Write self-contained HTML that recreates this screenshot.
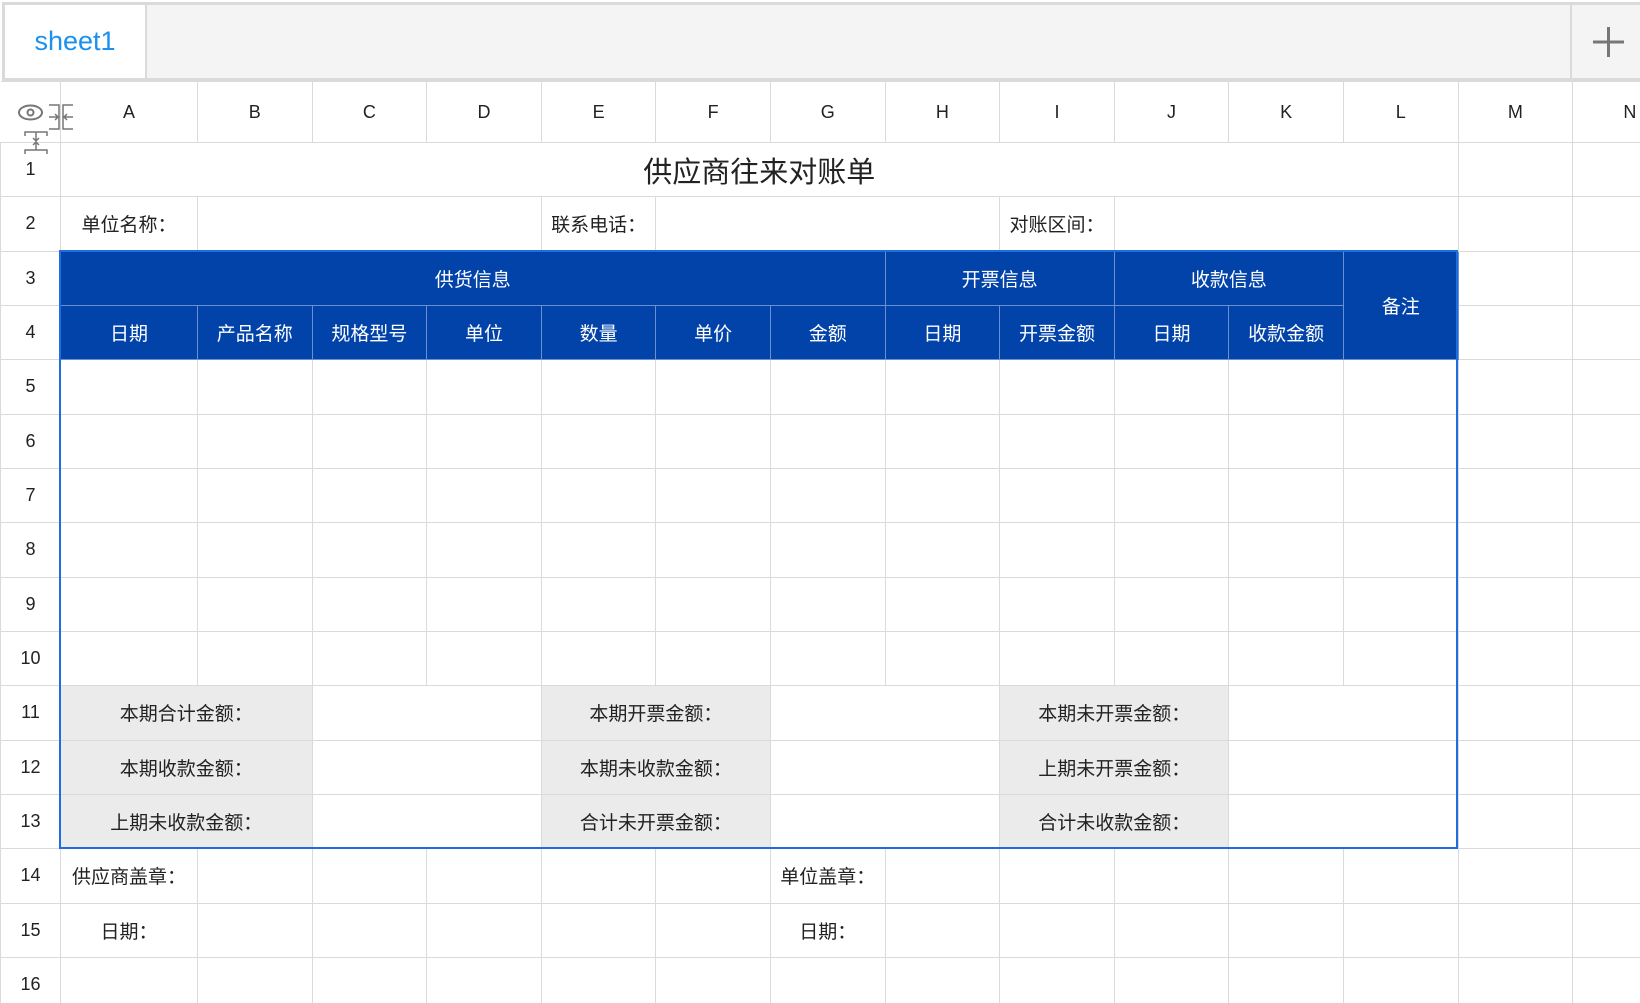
<!DOCTYPE html>
<html><head><meta charset="utf-8"><style>
*{margin:0;padding:0;box-sizing:border-box}
body{width:1640px;height:1003px;overflow:hidden;background:#fff;font-family:"Liberation Sans","Noto Sans CJK SC",sans-serif;position:relative;color:#222}
#tabbar{position:absolute;left:2px;top:2px;width:1640px;height:79px;background:#f4f4f4;border:3px solid #dadada;border-right:none}
#tab{position:absolute;left:0;top:0;width:142px;height:73px;background:#fff;border-right:2px solid #dadada;color:#1a90f0;font-size:27px;text-align:center;line-height:73px}
#plus{position:absolute;left:1565px;top:0;width:80px;height:73px;border-left:2px solid #dadada}
#grid{position:absolute;left:0;top:81px;overflow:hidden;width:1640px;height:922px}
table{border-collapse:collapse;table-layout:fixed;width:1687px}
td{border:1.5px solid #dadada;text-align:center;vertical-align:middle;font-size:19px;overflow:hidden;white-space:nowrap;padding:0}
tr{height:54.33px}
tr.h{height:61px}
tr.h td{font-size:18px}
td.rh{font-size:18px;color:#222}
td.b{background:#0243aa;color:#fff;border-color:#6b8fd0}
td.g{background:#ebebeb}
td.t{font-size:29px}
#blue{position:absolute;left:59px;top:250px;width:1399px;height:599px;border:2px solid #1f6ee0;pointer-events:none}
#icons{position:absolute;left:0;top:95px}
</style></head><body>
<div id="tabbar"><div id="tab">sheet1</div><div id="plus"><svg width="80" height="73"><path d="M21 37H52M36.5 22V52" stroke="#777" stroke-width="3"/></svg></div></div>
<div id="grid">
<table>
<colgroup><col style="width:60px"><col style="width:137px"><col span="13" style="width:114.6px"></colgroup>
<tr class="h"><td style="border-left:none"></td><td>A</td><td>B</td><td>C</td><td>D</td><td>E</td><td>F</td><td>G</td><td>H</td><td>I</td><td>J</td><td>K</td><td>L</td><td>M</td><td>N</td></tr>
<tr><td class="rh">1</td><td colspan="12" class="t">供应商往来对账单</td><td></td><td></td></tr>
<tr><td class="rh">2</td><td>单位名称：</td><td colspan="3"></td><td>联系电话：</td><td colspan="3"></td><td>对账区间：</td><td colspan="3"></td><td></td><td></td></tr>
<tr><td class="rh">3</td><td colspan="7" class="b">供货信息</td><td colspan="2" class="b">开票信息</td><td colspan="2" class="b">收款信息</td><td rowspan="2" class="b">备注</td><td></td><td></td></tr>
<tr><td class="rh">4</td><td class="b">日期</td><td class="b">产品名称</td><td class="b">规格型号</td><td class="b">单位</td><td class="b">数量</td><td class="b">单价</td><td class="b">金额</td><td class="b">日期</td><td class="b">开票金额</td><td class="b">日期</td><td class="b">收款金额</td><td></td><td></td></tr>
<tr><td class="rh">5</td><td></td><td></td><td></td><td></td><td></td><td></td><td></td><td></td><td></td><td></td><td></td><td></td><td></td><td></td></tr>
<tr><td class="rh">6</td><td></td><td></td><td></td><td></td><td></td><td></td><td></td><td></td><td></td><td></td><td></td><td></td><td></td><td></td></tr>
<tr><td class="rh">7</td><td></td><td></td><td></td><td></td><td></td><td></td><td></td><td></td><td></td><td></td><td></td><td></td><td></td><td></td></tr>
<tr><td class="rh">8</td><td></td><td></td><td></td><td></td><td></td><td></td><td></td><td></td><td></td><td></td><td></td><td></td><td></td><td></td></tr>
<tr><td class="rh">9</td><td></td><td></td><td></td><td></td><td></td><td></td><td></td><td></td><td></td><td></td><td></td><td></td><td></td><td></td></tr>
<tr><td class="rh">10</td><td></td><td></td><td></td><td></td><td></td><td></td><td></td><td></td><td></td><td></td><td></td><td></td><td></td><td></td></tr>
<tr><td class="rh">11</td><td colspan="2" class="g">本期合计金额：</td><td colspan="2"></td><td colspan="2" class="g">本期开票金额：</td><td colspan="2"></td><td colspan="2" class="g">本期未开票金额：</td><td colspan="2"></td><td></td><td></td></tr>
<tr><td class="rh">12</td><td colspan="2" class="g">本期收款金额：</td><td colspan="2"></td><td colspan="2" class="g">本期未收款金额：</td><td colspan="2"></td><td colspan="2" class="g">上期未开票金额：</td><td colspan="2"></td><td></td><td></td></tr>
<tr><td class="rh">13</td><td colspan="2" class="g">上期未收款金额：</td><td colspan="2"></td><td colspan="2" class="g">合计未开票金额：</td><td colspan="2"></td><td colspan="2" class="g">合计未收款金额：</td><td colspan="2"></td><td></td><td></td></tr>
<tr><td class="rh">14</td><td>供应商盖章：</td><td></td><td></td><td></td><td></td><td></td><td>单位盖章：</td><td></td><td></td><td></td><td></td><td></td><td></td><td></td></tr>
<tr><td class="rh">15</td><td>日期：</td><td></td><td></td><td></td><td></td><td></td><td>日期：</td><td></td><td></td><td></td><td></td><td></td><td></td><td></td></tr>
<tr><td class="rh">16</td><td></td><td></td><td></td><td></td><td></td><td></td><td></td><td></td><td></td><td></td><td></td><td></td><td></td><td></td></tr>
</table>
</div>
<svg id="icons" width="80" height="62"><ellipse cx="30.5" cy="17.5" rx="11.5" ry="7" fill="none" stroke="#777" stroke-width="2"/><circle cx="30.5" cy="17.5" r="3" fill="none" stroke="#777" stroke-width="2"/><path d="M49 10h10v24h-10M73 10h-10v24h10M49 22h9M55 19l3 3-3 3M73 22h-9M67 19l-3 3 3 3" stroke="#777" stroke-width="1.5" fill="none"/><path d="M25 41v-4h22v4M25 59v-4h22v4M36 37v9M33 43l3 3 3-3M36 55v-8M33 50l3-3 3 3" stroke="#777" stroke-width="1.5" fill="none"/></svg>
<div id="blue"></div>
</body></html>
